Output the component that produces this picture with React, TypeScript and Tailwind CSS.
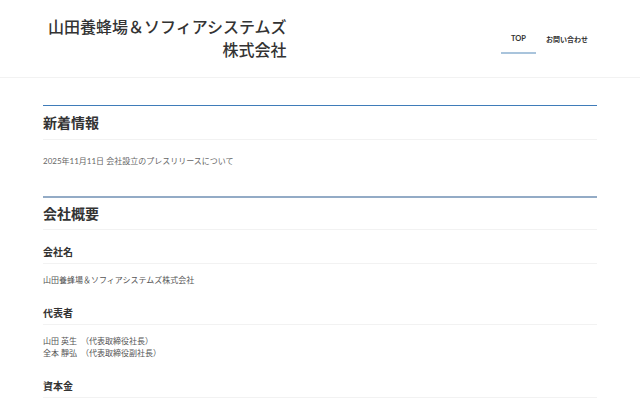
import React from 'react';

const FONT = { fontFamily: 'Lato, "Noto Sans CJK JP", sans-serif' };

type Row = { label: string; lines: string[] };

const rows: Row[] = [
  { label: '会社名', lines: ['山田養蜂場＆ソフィアシステムズ株式会社'] },
  { label: '代表者', lines: ['山田 英生　（代表取締役社長）', '全本 靜弘　（代表取締役副社長）'] },
  { label: '資本金', lines: [] },
];

function Header() {
  return (
    <header className="h-[78px] border-b border-[#f2f2f2] bg-white">
      <div className="mx-auto flex h-full max-w-[554px] items-center justify-between">
        <h1
          className="ml-[5px] mt-[-2px] text-right text-[16px] font-medium leading-[23px] text-[#333]"
          style={{ fontFamily: '"Noto Sans CJK JP", sans-serif' }}
        >
          <span className="block">山田養蜂場＆ソフィアシステムズ</span>
          <span className="block">株式会社</span>
        </h1>
        <nav className="mr-[-1px] flex items-center text-[7px] font-bold text-[#333]">
          <a className="ml-[2px] border-b-2 border-[#a9c4dc] px-[10px] pb-[7px] pt-[10px] text-[7.5px]">TOP</a>
          <a className="border-b-2 border-transparent px-[10px] pb-[7px] pt-[10px]">お問い合わせ</a>
        </nav>
      </div>
    </header>
  );
}

export default function App() {
  return (
    <div className="min-h-screen bg-white" style={FONT}>
      <Header />
      <main className="mx-auto max-w-[554px] pt-[27px]">
        <section className="border-t-[1px] border-t-[#3f7cb9]">
          <h2 className="flex h-[34px] items-center border-b border-[#f2f2f2] text-[14px] font-bold text-[#333]">
            新着情報
          </h2>
          <p className="pb-[29px] pt-[15px] text-[8px] leading-[12px] text-[#666]">
            2025年11月11日 会社設立のプレスリリースについて
          </p>
        </section>
        <section className="border-t-2 border-t-[#93abc6]">
          <h2 className="flex h-[32px] items-center border-b border-[#f2f2f2] text-[14px] font-bold text-[#333]">
            会社概要
          </h2>
          {rows.map((row) => (
            <div key={row.label}>
              <h3 className="border-b border-[#f2f2f2] pb-[4px] pt-[15px] text-[10px] font-bold leading-[14px] text-[#333]">
                {row.label}
              </h3>
              {row.lines.length > 0 ? (
                <div className="pb-[5px] pt-[10px] text-[8px] leading-[12px] text-[#555]">
                  {row.lines.map((line) => (
                    <p key={line}>{line}</p>
                  ))}
                </div>
              ) : null}
            </div>
          ))}
        </section>
      </main>
    </div>
  );
}
